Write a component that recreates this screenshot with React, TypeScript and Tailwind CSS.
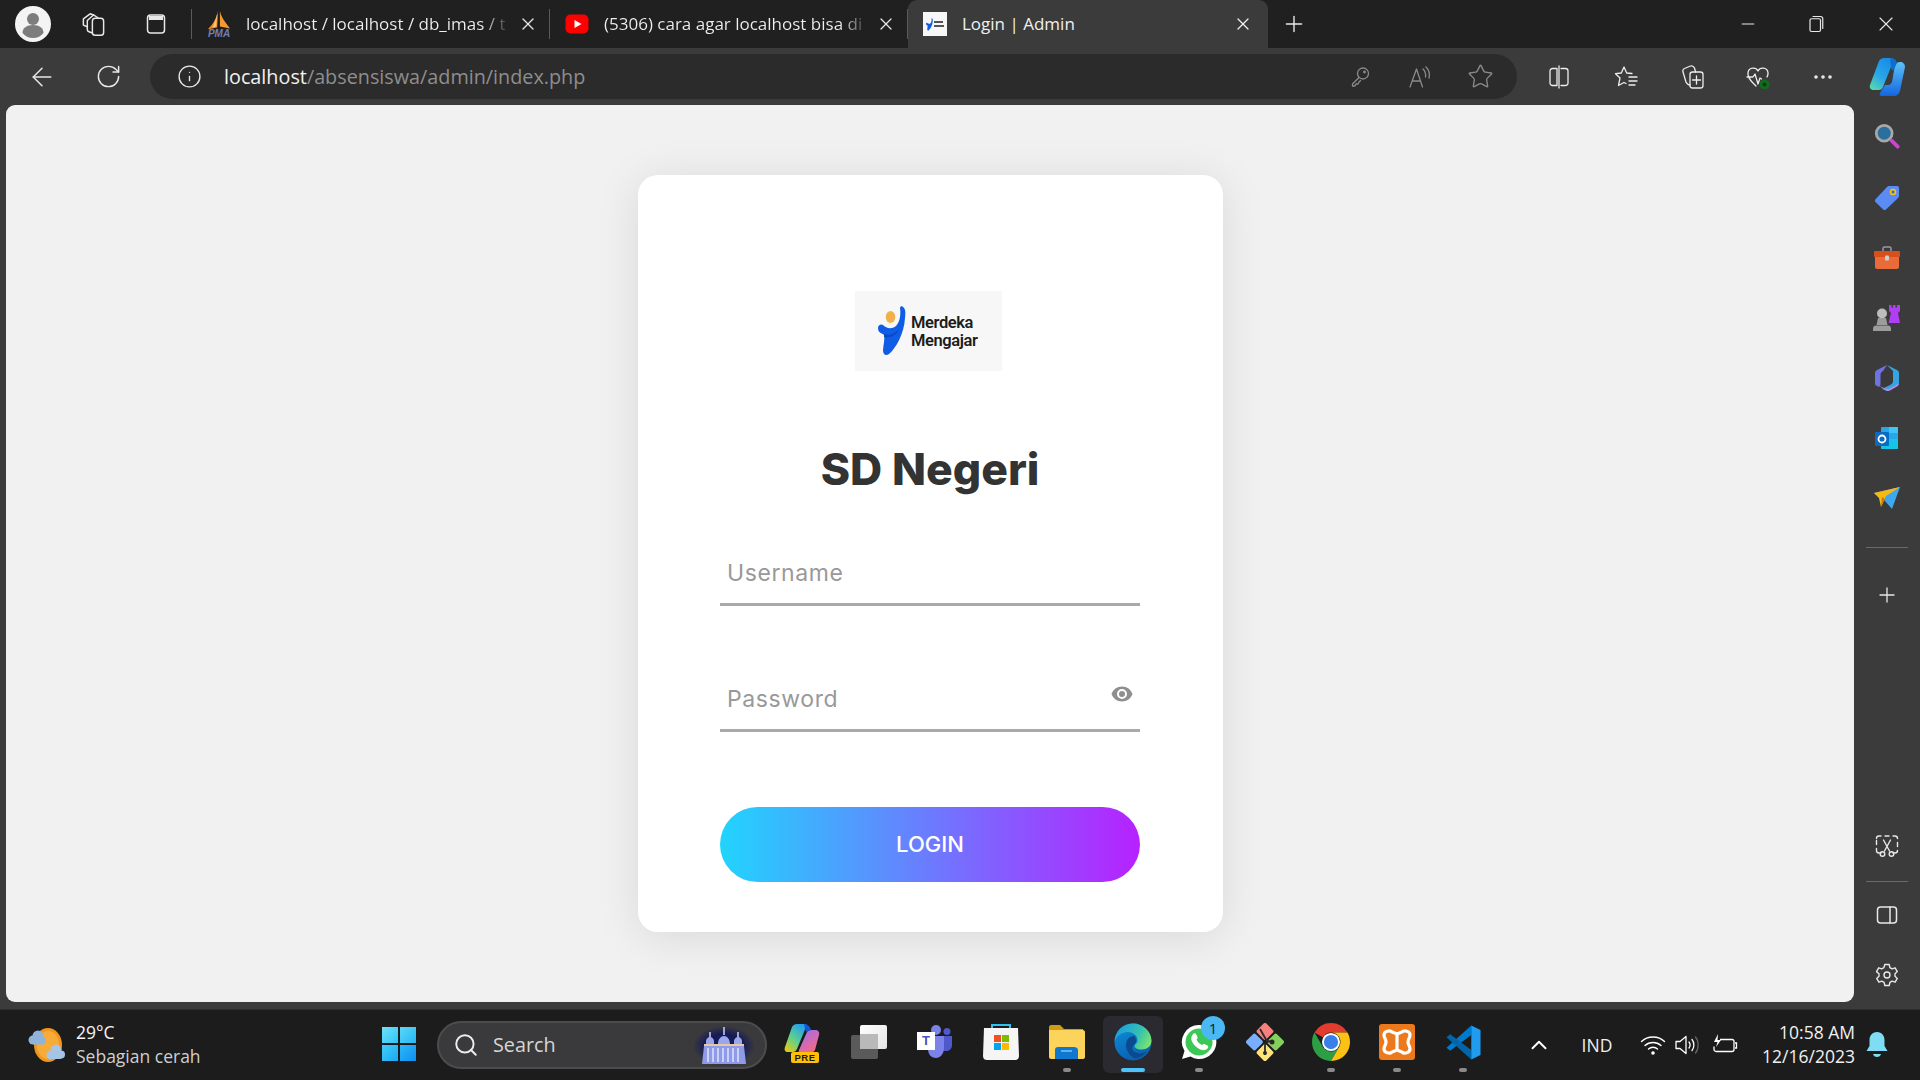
import React from "react";
import { X, Plus, Minus, ArrowLeft, RotateCw, Info, Star, ChevronUp, Search, MoreHorizontal } from "lucide-react";

const S = ({ w = 24, h = 24, vb, children, className = "" }: { w?: number; h?: number; vb?: string; children: React.ReactNode; className?: string }) => (
  <svg width={w} height={h} viewBox={vb ?? `0 0 ${w} ${h}`} fill="none" className={className}>{children}</svg>
);

const stroke = { stroke: "currentColor", strokeWidth: 1.3, strokeLinecap: "round" as const, strokeLinejoin: "round" as const };

const Profile = () => (
  <S w={36} h={36} vb="0 0 36 36">
    <circle cx="18" cy="18" r="18" fill="#f4f4f4" />
    <circle cx="18" cy="13" r="6" fill="#7d7d7d" />
    <path d="M7.5 27c0-5 4-8 10.500-8s10.500 3 10.500 8c-2.500 3-6 5-10.500 5s-8-2-10.500-5z" fill="#7d7d7d" />
  </S>
);
const Workspaces = () => (
  <S w={27} h={27} vb="0 0 24 24"><g {...stroke}><rect x="11" y="6.500" width="10" height="15" rx="2.500" /><path d="M11 19.500l-3-1c-1-.3-1.500-1-1.500-2V8.500L12 3.500l4 2.500" /><path d="M6.500 14L3 12.500V7l6-4.500 3 1" /></g></S>
);
const TabActions = () => (
  <S w={24} h={24}><rect x="3.500" y="3" width="17" height="18" rx="3" {...stroke} strokeWidth={1.5} /><path d="M5 4h14v4H5z" fill="currentColor" /></S>
);
const PmaFav = () => (
  <div className="relative w-[24px] h-[30px]">
    <S w={24} h={24} vb="0 0 26 24">
      <path d="M12 1C11 8 7 15 1 21l10-2z" fill="#f08a1d" />
      <path d="M14 1c1 6 5 12 11 19l-11-2z" fill="#f59a2d" />
      <path d="M6 19c2-5 4-10 5-15l-1 14z" fill="#fbc27c" />
    </S>
    <span className="absolute left-0 bottom-0 w-full text-center text-[10px] leading-[10px] font-bold italic text-[#6f7fb8] font-['Liberation_Sans',sans-serif]">PMA</span>
  </div>
);
const YtFav = () => (
  <S w={24} h={24}><rect x="0.500" y="2.500" width="23" height="19" rx="5" fill="#ff0000" /><path d="M9.500 8l7 4-7 4z" fill="#fff" /></S>
);
const LoginFav = () => (
  <div className="w-6 h-6 bg-[#f7f7f7] flex items-center gap-[1px] pl-[3px]">
    <S w={7} h={15} vb="0 0 28 50"><path d="M24.500.5c2.500 1.500 3.500 4.500 2.500 11.500-1 16-9 30-16 36-3 2-6 1-6-4 .5-6 2-11 1-15-2-2-6-2-6-7 0-3 3-4.500 5-3 3 3 8 5 13 1 4-4 5-12 4-18 0-1.500 1.500-2 2.500-1.500z" fill="#0f5ce6" /></S>
    <div className="flex flex-col gap-[2px]"><div className="w-[9px] h-[2px] bg-[#555]" /><div className="w-[10px] h-[2px] bg-[#555]" /></div>
  </div>
);

const Tab = ({ fav, title }: { fav: React.ReactNode; title: string }) => (
  <div className="w-[358px] h-[30px] flex items-center shrink-0 border-r border-[#5a5a5a]">
    <div className="w-[54px] pl-[15px] flex items-center shrink-0">{fav}</div>
    <div className="w-[268px] whitespace-nowrap text-[17px] bg-clip-text text-transparent bg-[linear-gradient(90deg,#f0f0f0_88%,#20202000_99%)]">{title}</div>
    <X size={20} strokeWidth={1.5} color="#e8e8e8" className="ml-[4px] shrink-0" />
  </div>
);

const Key = () => (<S w={24} h={24}><g {...stroke}><circle cx="15" cy="8.500" r="5.500" /><path d="M11 12.500L4.500 19v2H7l1-2h2l1-2 1.500-1.500" /><circle cx="16.500" cy="7" r=".8" /></g></S>);
const ReadAloud = () => (<S w={26} h={26}><g {...stroke}><path d="M3 23L9.500 5l6 18M5.500 17h8" /><path d="M16 5c2 2 3 5 2.500 8M19 3c3 3 4 7 3 11" /></g></S>);
const Split = () => (<S w={26} h={26}><g {...stroke}><path d="M11 4.500H6.500a2.500 2.500 0 0 0-2.500 2.500v12a2.500 2.500 0 0 0 2.500 2.500H11zM15 4.500h4.500A2.500 2.500 0 0 1 22 7v12a2.500 2.500 0 0 1-2.500 2.500H15M13 2v22" /></g></S>);
const FavList = () => (<S w={26} h={26}><g {...stroke}><path d="M18 9.500L12.700 9 10 3 7.300 9l-5.800.7L6 14l-1.500 7.500 5.500-3 2 1" /><path d="M15 13h8M15 17h8M15 21h6" /></g></S>);
const Coll = () => (<S w={26} h={26}><g {...stroke}><rect x="10" y="8" width="13" height="16" rx="2.500" /><path d="M16.500 12v8M12.500 16h8M10 21c-2 0-3-1-4-3L3 8c-.5-1.500 0-3 1.500-3.500l6-2.500c1.500-.5 3 0 4 2l1 4" /></g></S>);
const Health = () => (
  <S w={28} h={28}><g {...stroke}><path d="M14 8c-2-4-9-4-10 1.500C3.500 13 5 16 9 20l3 3M14 8c2-4 9-4 10 1.500.3 2-.2 3-1 4.500" /><path d="M3 14h6l2-3 3 10 2-6 1.500 1" /></g><circle cx="20.500" cy="21.500" r="5" fill="#126b1e" /><circle cx="20.500" cy="21.500" r="2" fill="#0b3d12" /></S>
);
const CopilotTop = () => (
  <S w={38} h={40} vb="0 0 38 40">
    <defs>
      <linearGradient id="ct1" x1="0" y1="1" x2="0.600" y2="0"><stop offset="0" stopColor="#5fe0a4" /><stop offset="0.500" stopColor="#2aa7e8" /><stop offset="1" stopColor="#1a8fe8" /></linearGradient>
      <linearGradient id="ct2" x1="0.500" y1="0" x2="0.500" y2="1"><stop offset="0" stopColor="#5cc3f7" /><stop offset="1" stopColor="#1565e0" /></linearGradient>
    </defs>
    <path d="M27 8c1-2 3-3 5-3 3 0 5 2 5 5l-5 24c-1 3-3 5-6 5H14c-2 0-3-1-2-3l5-8h3c2 0 3-1 4-3z" fill="url(#ct2)" />
    <path d="M11 4c1-2 3-3 5-3h7c2 0 3 2 2 4L15 30c-1 2-2 3-4 3H6c-3 0-5-2-4-5z" fill="url(#ct1)" />
    <path d="M22 1c3 0 6 1 7 5l-4 8-2-3z" fill="#0e6fc9" />
  </S>
);

const Panel = () => (<S w={24} h={24}><g {...stroke} strokeWidth={1.5}><rect x="2.500" y="4" width="19" height="16" rx="3" /><path d="M15 4v16" /></g></S>);
const Gear = () => (<S w={26} h={26}><g {...stroke} strokeWidth={1.4}><circle cx="13" cy="13" r="3" /><path d="M10.800 2.500h4.400l.7 3.100 2.200 1.200 3-1 2.200 3.800-2.300 2.100v2.600l2.300 2.100-2.200 3.800-3-1-2.200 1.200-.7 3.100h-4.400l-.7-3.100-2.200-1.200-3 1-2.200-3.800 2.300-2.100v-2.600L2.500 9.600l2.200-3.800 3 1 2.200-1.200z" /></g></S>);
const Snip = () => (<S w={26} h={26}><g {...stroke} strokeWidth={1.4}><path d="M7 20H5c-1.500 0-2.500-1-2.500-2.500v-2M2.500 11.500v-4M2.500 5.500C2.500 4 3.500 3 5 3h2M11 3h4M19 3h2c1.500 0 2.500 1 2.500 2.500M23.500 9.500v4M23.500 17.500c0 1.500-1 2.500-2.500 2.500h-2" /><path d="M9.500 7l6 11M16.500 7l-6 11" /><circle cx="8.500" cy="21" r="2.300" /><circle cx="17.500" cy="21" r="2.300" /></g></S>);

const SbSearch = () => (<S w={26} h={26} vb="0 0 28 28"><circle cx="11" cy="11" r="8.500" fill="#2a6f9e" stroke="#a8a8a8" strokeWidth="3" /><path d="M19 19l6.500 6.500" stroke="#d43fd9" strokeWidth="4" strokeLinecap="round" /></S>);
const SbTag = () => (<S w={26} h={26}><path d="M15 1h8c1.200 0 2 .8 2 2v8c0 .8-.3 1.300-1 2L12 24.500c-.8.800-2 .8-2.800 0L1.500 17c-.8-.8-.8-2 0-2.800L13 2c.6-.7 1.200-1 2-1z" fill="#5b8cf5" /><circle cx="19" cy="7" r="2.500" fill="#4a6fd0" stroke="#ffc800" strokeWidth="1.500" /></S>);
const SbTool = () => (<S w={28} h={24} vb="0 0 28 24"><path d="M10 5V2.500C10 1.500 10.500 1 11.500 1h5c1 0 1.500.5 1.500 1.500V5" stroke="#9a9a9a" strokeWidth="1.500" /><rect x="1" y="5" width="26" height="6" rx="1" fill="#d94f1c" /><path d="M2 11h24v10c0 1-1 2-2 2H4c-1 0-2-1-2-2z" fill="#e96b3a" /><rect x="12" y="9.500" width="4" height="5" rx="1" fill="#cfcfcf" /></S>);
const SbChess = () => (<S w={28} h={28}><path d="M16 1h2.500v2.500H20V1h2.500v2.500H24V1h3v6l-2 2 2 10H15.500L18 9l-2-2z" fill="#b13df5" /><circle cx="9" cy="9.500" r="5" fill="#bdbdbd" /><path d="M5 14h8l1.500 7h-11zM0 25c0-2 1-3.500 3-3.500h12c2 0 3 1.500 3 3.500v2H0z" fill="#9c9c9c" /></S>);
const Sb365 = () => (
  <S w={26} h={28} vb="0 0 26 28"><path d="M13 1l10 5c1.500 1 2 2 2 3v10c0 1-.5 2-2 3l-10 5-5-2 8-4c2-1 3-2 3-4V7z" fill="#36a4e0" /><path d="M13 1L3 6C1.500 7 1 8 1 9v10c0 1.500.5 2.500 2 3l1.500.8c1.500 0 2-1 2-3v-9C6.500 9 7.500 8 9 7z" fill="#6f72e0" /><path d="M5 22l8 5c1 0 2 0 3-.5l7-4c1.500-1 2-2 2-3l-9 5c-3 1.500-6-.5-11-2.500z" fill="#b98be8" /><path d="M7 11l6-3.500 6 3v7l-6 3-6-3z" fill="#3a3a3a" /></S>
);
const SbOutlook = () => (<S w={26} h={26}><rect x="7" y="2" width="17" height="22" rx="1" fill="#28a8ea" /><path d="M7 14h17v9a1 1 0 0 1-1 1H8a1 1 0 0 1-1-1z" fill="#14c5e8" /><rect x="15" y="2" width="9" height="6" fill="#50d9ff" opacity=".6" /><rect x="1" y="7" width="14" height="14" rx="1" fill="#0a6bc2" /><circle cx="8" cy="14" r="3.500" stroke="#fff" strokeWidth="1.800" /></S>);
const SbSend = () => (<S w={28} h={24} vb="0 0 28 24"><path d="M1 7l26-6-8 22-7-8z" fill="#3fa7ec" /><path d="M1 7l26-6-14 9-5 11-2-9z" fill="#f5b915" /><path d="M8 21l1-10 3 2z" fill="#c97a0a" /></S>);

const Weather = () => (
  <S w={38} h={36} vb="0 0 38 36">
    <ellipse cx="21" cy="18" rx="14" ry="17" fill="#f0961c" />
    <ellipse cx="21" cy="18" rx="11" ry="14" fill="#f7ac3a" />
    <circle cx="11" cy="9" r="5.500" fill="#8fb4dc" /><circle cx="6" cy="13" r="4.500" fill="#8fb4dc" /><circle cx="15" cy="13.500" r="4" fill="#8fb4dc" /><rect x="5" y="13" width="11" height="4.500" rx="2" fill="#8fb4dc" />
    <circle cx="29" cy="23" r="5.500" fill="#a6c4e3" /><circle cx="24" cy="28" r="4.500" fill="#a6c4e3" /><circle cx="34" cy="27.500" r="4" fill="#a6c4e3" /><rect x="23" y="27.500" width="12" height="4.500" rx="2" fill="#a6c4e3" />
  </S>
);
const WinLogo = () => (
  <div className="grid grid-cols-2 gap-[2px] w-[34px] h-[34px]">
    <div className="bg-[linear-gradient(135deg,#6fe2f8,#2cc4f5)]" />
    <div className="bg-[linear-gradient(135deg,#5cd7f8,#25b7f5)]" />
    <div className="bg-[linear-gradient(135deg,#42cdf8,#1aa6f5)]" />
    <div className="bg-[linear-gradient(135deg,#2cb8f8,#0f8ff0)]" />
  </div>
);
const Palace = () => (
  <S w={62} h={40} vb="0 0 62 40">
    <defs><radialGradient id="pg"><stop offset="0.600" stopColor="#161a55" /><stop offset="1" stopColor="#161a5500" /></radialGradient></defs>
    <ellipse cx="31" cy="21" rx="31" ry="20" fill="url(#pg)" />
    <path d="M31 2v8M17 7v8M45 7v8" stroke="#c7d0ff" strokeWidth="1.500" />
    <path d="M25 19c0-5 3-8 6-8s6 3 6 8zM13 19v-3c0-2 2-4 4-4s4 2 4 4v3zM41 19v-3c0-2 2-4 4-4s4 2 4 4v3z" fill="#9aa6ee" />
    <rect x="11" y="19" width="40" height="2" fill="#e7c9a0" />
    <path d="M11 21h40l2 18H9z" fill="#8f9ae8" />
    <path d="M15 23v14M20 23v14M25 23v14M30 23v14M35 23v14M40 23v14M45 23v14" stroke="#dfe3ff" strokeWidth="1.500" />
  </S>
);
const CopilotPre = () => (
  <div className="relative w-[38px] h-[38px]">
    <S w={36} h={30} vb="0 0 36 30">
      <defs>
        <linearGradient id="cpa" x1="0" y1="1" x2="0.700" y2="0"><stop offset="0" stopColor="#ffc800" /><stop offset="0.500" stopColor="#5fd08c" /><stop offset="1" stopColor="#25a0ee" /></linearGradient>
        <linearGradient id="cpb" x1="0.200" y1="0" x2="0.800" y2="1"><stop offset="0" stopColor="#a26bf0" /><stop offset="1" stopColor="#ff6a78" /></linearGradient>
      </defs>
      <path d="M8 4c1-2 3-3 5-3h8c2 0 2 2 1 3L13 26c-1 2-2 3-4 3H4c-3 0-4-2-3-5z" fill="url(#cpa)" />
      <path d="M23 9c1-1 2-2 4-2h4c3 0 5 2 4 5l-4 15c-1 2-3 3-5 3h-9c-2 0-3-1-2-3z" fill="url(#cpb)" />
      <path d="M20 1c3 0 6 2 7 6l-5 2z" fill="#1557d0" />
    </S>
    <div className="absolute bottom-[-2px] left-[7px] w-[28px] h-[11px] rounded-[2px] bg-[#ffc107] text-[#1c1c1c] text-[9.500px] leading-[11px] font-bold text-center tracking-[.5px] font-['Liberation_Sans',sans-serif]">PRE</div>
  </div>
);
const TaskView = () => (
  <div className="relative w-[36px] h-[34px]">
    <div className="absolute left-0 bottom-0 w-[27px] h-[24px] rounded-[2px] bg-[#5a5a5a]" />
    <div className="absolute right-0 top-0 w-[27px] h-[24px] rounded-[2px] bg-[linear-gradient(135deg,#ffffff,#e5e5e5)]" />
    <div className="absolute left-[9px] top-[9px] w-[18px] h-[15px] bg-[#b9b9b9]" />
  </div>
);
const Teams = () => (
  <div className="relative w-[36px] h-[34px]">
    <S w={36} h={34} vb="0 0 36 34"><circle cx="19" cy="5" r="5" fill="#7b83eb" /><circle cx="30" cy="6.500" r="3.500" fill="#5059c9" /><path d="M26 11h9v9c0 4-3 6-6 6-1 0-2 0-3-.5z" fill="#5059c9" /><path d="M11 11h16v12c0 6-4 10-8 10-5 0-8-4-8-9z" fill="#7b83eb" /></S>
    <div className="absolute left-0 top-[7px] w-[18px] h-[18px] bg-white text-[#4b53bc] text-[13px] leading-[18px] font-bold text-center font-['Liberation_Sans',sans-serif]">T</div>
  </div>
);
const Store = () => (
  <S w={36} h={38} vb="0 0 36 38"><path d="M9 6V2h18v4" stroke="#2fc0ec" strokeWidth="2" /><path d="M1 5h34l1 28c0 3-2 4-4 4H4c-2 0-4-1-4-4z" fill="#f5f5f5" /><rect x="11" y="12" width="7" height="7" fill="#f25022" /><rect x="19" y="12" width="7" height="7" fill="#7fba00" /><rect x="11" y="20" width="7" height="7" fill="#00a4ef" /><rect x="19" y="20" width="7" height="7" fill="#ffb900" /></S>
);
const Folder = () => (
  <S w={36} h={34} vb="0 0 36 34"><path d="M0 2c0-1 1-2 2-2h9l4 4h19v10H0z" fill="#d19d10" /><path d="M0 5h34c1 0 2 1 2 2v25c0 1-1 2-2 2H2c-1 0-2-1-2-2z" fill="#fcd45c" /><path d="M6 34V25c0-2 1-3 3-3h16c2 0 4 1 4 3v9z" fill="#0f77cf" /><path d="M12 26h11" stroke="#7fc2f0" strokeWidth="1.500" /></S>
);
const Edge = () => (
  <S w={38} h={38} vb="0 0 38 38">
    <defs>
      <linearGradient id="eg1" x1="0" y1="0.300" x2="1" y2="0.700"><stop offset="0" stopColor="#1a9de0" /><stop offset="0.600" stopColor="#35c1b0" /><stop offset="1" stopColor="#7de56a" /></linearGradient>
      <linearGradient id="eg2" x1="0.200" y1="0" x2="0.600" y2="1"><stop offset="0" stopColor="#0c8ed9" /><stop offset="1" stopColor="#0a5fae" /></linearGradient>
    </defs>
    <circle cx="19" cy="19" r="18.500" fill="url(#eg2)" />
    <path d="M19 .5c10 0 18.500 8 18.500 17 0 6-5 9-10 9-4 0-7-1.500-7-3.500 0-1.500 3-2.500 3-6 0-5-5-8-10-8S2 13 .5 19C.5 9 8 .5 19 .5z" fill="url(#eg1)" />
    <path d="M20 13c-5 0-8 4-8 9s3 10 8 13c2 1 9-1 13-7-3 2-7 3-10 2-4-1-5-3-4.500-6 .5-2 3-3 3.500-5 .3-2-.5-6-2-6z" fill="#0b4a8f" />
  </S>
);
const WhatsApp = () => (
  <S w={38} h={38} vb="0 0 38 38"><path d="M19 2a17 17 0 0 0-14.500 26L2 36l8.500-2.500A17 17 0 1 0 19 2z" fill="#fff" /><circle cx="19" cy="19" r="13.500" fill="#3cc856" /><path d="M13 11c1-1 2.500-1 3 0l1.500 3c.3 1 0 1.500-1 2.500 1 2.500 3 4.500 5.500 5.500 1-1 1.500-1.300 2.500-1l3 1.500c1 .5 1 2 0 3-2 2-5 2.500-9 0-3.500-2-6-5.500-7-8-.5-2.500 0-4.500 1.500-6.500z" fill="#fff" /></S>
);
const GitApp = () => (
  <S w={38} h={38} vb="0 0 38 38">
    <g transform="rotate(45 19 19)"><rect x="5" y="5" width="13" height="13" rx="2" fill="#f58080" /><rect x="20" y="5" width="13" height="13" rx="2" fill="#84d05a" /><rect x="20" y="20" width="13" height="13" rx="2" fill="#ffe27a" /><rect x="5" y="20" width="13" height="13" rx="2" fill="#7aaeff" /></g>
    <path d="M14 6l8 14M19 20v12M22 18l5 1" stroke="#2a2a2a" strokeWidth="1.800" /><circle cx="26" cy="19" r="2.500" fill="#2a2a2a" /><circle cx="19" cy="30" r="2" fill="#2a2a2a" />
  </S>
);
const Chrome = () => (
  <S w={38} h={38} vb="4 4 40 40">
    <path d="M24 4a20 20 0 0 1 17.320 10H24a10 10 0 0 0-8.660 5L6.680 14A20 20 0 0 1 24 4z" fill="#e33b2e" />
    <path d="M6.680 14l8.660 15a10 10 0 0 0 17.320 0L24 44A20 20 0 0 1 6.680 14z" fill="#2c9f45" />
    <path d="M41.320 14H24a10 10 0 0 1 8.660 15L24 44a20 20 0 0 0 17.320-30z" fill="#fbc115" />
    <circle cx="24" cy="24" r="9.500" fill="#fff" /><circle cx="24" cy="24" r="7.500" fill="#3a7ee8" />
  </S>
);
const Xampp = () => (
  <S w={36} h={36} vb="6 6 36 36"><rect x="6" y="6" width="36" height="36" rx="3" fill="#ec7a1d" /><path d="M11 17c0-4 6-5 8-3l5 2 5-2c2-2 8-1 8 3 0 3-2 4-2 7s2 4 2 7c0 4-6 5-8 3l-5-2-5 2c-2 2-8 1-8-3 0-3 2-4 2-7s-2-4-2-7z" stroke="#fff" strokeWidth="3.200" /><path d="M24 16v16" stroke="#fff" strokeWidth="3.200" /></S>
);
const VSCode = () => (
  <S w={37} h={37} vb="0 0 100 100"><path d="M71 30L14 72 4 64 71 4z" fill="#007acc" /><path d="M71 70L14 28 4 36l67 60z" fill="#0065a9" /><path d="M71 4l25 12v68L71 96z" fill="#1f9cf0" /></S>
);
const Wifi = () => (<S w={26} h={22} vb="0 0 26 22"><g stroke="#fff" strokeWidth="1.400" strokeLinecap="round"><path d="M1.500 7.500c6-6 17-6 23 0M5 11.500c4.500-4 11.500-4 16 0M8.500 15c2.500-2.300 6.500-2.300 9 0" /></g><circle cx="13" cy="19" r="1.800" fill="#fff" /></S>);
const Speaker = () => (<S w={26} h={24} vb="0 0 26 24"><path d="M2 8.500h4l6-5v17l-6-5H2z" stroke="#fff" strokeWidth="1.300" strokeLinejoin="round" /><path d="M15 9c1.500 2 1.500 4 0 6M18 6.500c2.500 3 2.500 8 0 11" stroke="#fff" strokeWidth="1.300" strokeLinecap="round" /><path d="M21.500 4c3.500 4 3.500 12 0 16" stroke="#666" strokeWidth="1.300" strokeLinecap="round" /></S>);
const Battery = () => (<S w={26} h={24} vb="0 0 26 24"><path d="M8 6.500h12c1 0 2 1 2 2v8c0 1-1 2-2 2H4c-1 0-2-1-2-2v-3" stroke="#fff" strokeWidth="1.300" /><path d="M23 10h1.500v5H23" stroke="#fff" strokeWidth="1.300" /><path d="M6 1L2 9h3.500L4 14l5-7H5.500z" fill="#fff" /></S>);
const Bell = () => (<S w={24} h={30} vb="0 0 24 30"><path d="M12 2c5 0 7.500 4 7.500 8v6l3 5H1.500l3-5v-6c0-4 2.500-8 7.500-8z" fill="#7fdcf5" /><path d="M8 24h8c-.5 2-2 3-4 3s-3.500-1-4-3z" fill="#7fdcf5" /></S>);
const Eye = () => (<S w={22} h={16} vb="0 0 22 16"><path fillRule="evenodd" d="M11 0.500C6 .5 2 3.500 0.500 8 2 12.500 6 15.500 11 15.500S20 12.500 21.500 8C20 3.500 16 .5 11 .5zm0 12.500a5 5 0 1 1 0-10 5 5 0 0 1 0 10zm0-8a3 3 0 1 0 0 6 3 3 0 0 0 0-6z" fill="#8f8f8f" /></S>);

const LogoMark = () => (
  <S w={28} h={50} vb="0 0 28 50">
    <path d="M24.500.5c2.500 1.500 3.500 4.500 2.500 11.500-1 16-9 30-16 36-3 2-6 1-6-4 .5-6 2-11 1-15-2-2-6-2-6-7 0-3 3-4.500 5-3 3 3 8 5 13 1 4-4 5-12 4-18 0-1.500 1.500-2 2.500-1.500z" fill="#0f5ce6" />
    <path d="M6 28c5 2 11 0 15-5-2 6-8 9-15 8z" fill="#0b49bd" />
    <ellipse cx="12.500" cy="11" rx="4.800" ry="6" fill="#f2b04a" />
  </S>
);

const sidebarTop = [<SbTag key="t" />, <SbTool key="b" />, <SbChess key="c" />, <Sb365 key="m" />, <SbOutlook key="o" />, <SbSend key="s" />];

const Dot = ({ active = false }: { active?: boolean }) => (
  <div className={active ? "absolute bottom-[8px] w-[24px] h-[4px] rounded-full bg-[#4fc3f7]" : "absolute bottom-[8px] w-[8px] h-[4px] rounded-full bg-[#8a8a8a]"} />
);
const Slot = ({ children, dot, active }: { children: React.ReactNode; dot?: boolean; active?: boolean }) => (
  <div className="relative w-[66px] h-full flex items-center justify-center shrink-0">
    {active && <div className="absolute left-[3px] right-[3px] top-[6px] bottom-[7px] rounded-[6px] bg-[#2a2a30]" />}
    <div className="relative -mt-[6px] flex items-center justify-center">{children}</div>
    {dot && <Dot active={active} />}
  </div>
);

export default function App() {
  return (
    <div className="w-[1920px] h-[1080px] overflow-hidden flex flex-col bg-[#3b3b3b] text-white font-['Open_Sans','Noto_Sans',sans-serif]">
      {/* tab strip */}
      <div className="h-[48px] bg-[#202020] flex items-center shrink-0">
        <div className="w-[66px] flex justify-center"><Profile /></div>
        <div className="w-[54px] flex justify-center text-[#e8e8e8]"><Workspaces /></div>
        <div className="w-[71px] flex justify-center text-[#e8e8e8]"><TabActions /></div>
        <div className="w-px h-[30px] bg-[#5a5a5a]" />
        <Tab fav={<PmaFav />} title="localhost / localhost / db_imas / t" />
        <Tab fav={<YtFav />} title="(5306) cara agar localhost bisa di" />
        <div className="w-[360px] h-full bg-[#3b3b3b] rounded-t-[9px] flex items-center shrink-0">
          <div className="w-[54px] pl-[15px] shrink-0"><LoginFav /></div>
          <div className="w-[271px] text-[17px] text-[#f0f0f0] whitespace-nowrap">Login | Admin</div>
          <X size={20} strokeWidth={1.5} color="#f0f0f0" className="shrink-0" />
        </div>
        <div className="w-[52px] flex justify-center text-[#e8e8e8]"><Plus size={26} strokeWidth={1.3} /></div>
        <div className="flex-1" />
        <div className="w-[68px] flex justify-center text-[#e8e8e8]"><Minus size={20} strokeWidth={1.2} /></div>
        <div className="w-[68px] mr-[2px] flex justify-center text-[#e8e8e8]">
          <S w={18} h={18} vb="0 0 24 24"><g {...stroke} strokeWidth={1.6}><rect x="4" y="5" width="14" height="17" rx="2" /><path d="M8 2h10c2 0 3 1 3 3v13" /></g></S>
        </div>
        <div className="w-[68px] flex justify-center text-[#e8e8e8]"><X size={24} strokeWidth={1.1} /></div>
      </div>
      {/* toolbar */}
      <div className="h-[57px] flex items-start shrink-0">
        <div className="w-[75px] pl-[9px] h-[57px] flex items-center justify-center text-[#e8e8e8] shrink-0"><ArrowLeft size={30} strokeWidth={1.2} /></div>
        <div className="w-[66px] h-[57px] flex items-center justify-center text-[#e8e8e8] shrink-0"><RotateCw size={27} strokeWidth={1.3} /></div>
        <div className="w-[1367px] h-[45px] mt-[6px] ml-[9px] rounded-[23px] bg-[#2b2b2b] flex items-center shrink-0">
          <div className="w-[34px] ml-[22px] flex justify-center text-[#e8e8e8]"><Info size={25} strokeWidth={1.3} /></div>
          <div className="ml-[18px] text-[19.800px] whitespace-nowrap text-[#f2f2f2]">localhost<span className="text-[#8e8e8e]">/absensiswa/admin/index.php</span></div>
          <div className="flex-1" />
          <div className="w-[60px] flex justify-center text-[#8a8a8a]"><Key /></div>
          <div className="w-[60px] flex justify-center text-[#8a8a8a]"><ReadAloud /></div>
          <div className="w-[60px] mr-[7px] flex justify-center text-[#8a8a8a]"><Star size={27} strokeWidth={1.2} /></div>
        </div>
        <div className="h-[57px] ml-[9px] flex items-center text-[#ededed]">
          <div className="w-[66px] flex justify-center"><Split /></div>
          <div className="w-[70px] flex justify-center"><FavList /></div>
          <div className="w-[62px] flex justify-center"><Coll /></div>
          <div className="w-[68px] flex justify-center"><Health /></div>
          <div className="w-[62px] flex justify-center"><MoreHorizontal size={24} strokeWidth={1.6} /></div>
          <div className="w-[66px] flex justify-center"><CopilotTop /></div>
        </div>
      </div>
      {/* middle */}
      <div className="h-[897px] flex shrink-0">
        <div className="w-[1848px] ml-[6px] bg-[#f1f1f1] rounded-[9px] flex items-center justify-center shrink-0">
          <div className="w-[585px] h-[757px] bg-white rounded-[20px] shadow-[0_5px_45px_rgba(0,0,0,0.1)] flex flex-col items-center pt-[116px] font-['Inter',sans-serif]">
            <div className="w-[147px] h-[80px] mr-[3px] bg-[#f7f7f7] flex items-center pl-[23px] shrink-0">
              <LogoMark />
              <div className="ml-[5px] font-['Roboto',sans-serif] font-semibold text-[#1c1c1c] text-[16.500px] leading-[18px] tracking-[-.4px] mt-[1px]">Merdeka<br />Mengajar</div>
            </div>
            <h1 className="mt-[64px] text-[44.500px] leading-[68px] font-extrabold text-[#333333]">SD Negeri</h1>
            <div className="mt-[40px] w-[420px] relative">
              <input readOnly placeholder="Username" className="w-full h-[63px] border-b-[3px] border-[#a9a9a9] pl-[7px] text-[23px] outline-none placeholder:text-[#999999] tracking-[.6px]" />
            </div>
            <div className="mt-[63px] w-[420px] relative">
              <input readOnly placeholder="Password" className="w-full h-[63px] border-b-[3px] border-[#a9a9a9] pl-[7px] text-[23px] outline-none placeholder:text-[#999999] tracking-[.6px]" />
              <div className="absolute right-[7px] top-[17px]"><Eye /></div>
            </div>
            <button className="mt-[75px] w-[420px] h-[75px] rounded-full bg-[linear-gradient(90deg,#21d4fd,#b721ff)] text-white text-[22px] font-medium">LOGIN</button>
          </div>
        </div>
        <div className="w-[66px] flex flex-col items-center pt-[3px] text-[#e8e8e8] shrink-0">
          <div className="h-[60px] -mt-[2px] mb-[2px] flex items-center justify-center"><SbSearch /></div>
          {sidebarTop.map((ic, i) => (<div key={i} className="h-[60px] flex items-center justify-center">{ic}</div>))}
          <div className="mt-[19px] w-[42px] h-px bg-[#6a6a6a] shrink-0" />
          <div className="h-[60px] w-full mt-[17px] flex items-center justify-center"><Plus size={24} strokeWidth={1.3} /></div>
          <div className="flex-1" />
          <div className="h-[60px] mb-[5px] flex items-center justify-center"><Snip /></div>
          <div className="w-[42px] h-px bg-[#6a6a6a] mb-[3px] shrink-0" />
          <div className="h-[60px] flex items-center justify-center"><Panel /></div>
          <div className="h-[60px] -mb-[3px] flex items-center justify-center"><Gear /></div>
        </div>
      </div>
      <div className="h-[7px] shrink-0" />
      {/* taskbar */}
      <div className="h-[71px] bg-[#1c1c1c] border-t border-[#2e2e2e] flex items-center shrink-0">
        <div className="w-[370px] flex items-center pl-[27px] shrink-0">
          <Weather />
          <div className="ml-[11px] text-[17.500px] leading-[24px] -mt-[2px]">
            <div className="text-[#f4f4f4]">29°C</div>
            <div className="text-[#cfcfcf]">Sebagian cerah</div>
          </div>
        </div>
        <div className="w-[67px] pl-[12px] -mt-[2px] shrink-0"><WinLogo /></div>
        <div className="w-[330px] h-[48px] rounded-full bg-[#3a3a3c] border-2 border-[#4c4c4e] flex items-center pl-[14px] pr-[10px] -mt-[1px] shrink-0">
          <Search size={26} strokeWidth={1.8} color="#ededed" />
          <span className="ml-[14px] text-[19.800px] text-[#d6d6d6]">Search</span>
          <div className="flex-1" />
          <Palace />
        </div>
        <div className="w-[3px] shrink-0" />
        <div className="flex h-full items-stretch">
          <Slot><CopilotPre /></Slot>
          <Slot><TaskView /></Slot>
          <Slot><Teams /></Slot>
          <Slot><Store /></Slot>
          <Slot dot><Folder /></Slot>
          <Slot dot active><Edge /></Slot>
          <Slot dot>
            <div className="relative"><WhatsApp />
              <div className="absolute -top-[7px] right-[-7px] w-[24px] h-[24px] rounded-full bg-[#4ab8f5] text-[#10202c] text-[15px] leading-[24px] text-center">1</div>
            </div>
          </Slot>
          <Slot><GitApp /></Slot>
          <Slot dot><Chrome /></Slot>
          <Slot dot><Xampp /></Slot>
          <Slot dot><VSCode /></Slot>
        </div>
        <div className="w-[20px] shrink-0" />
        <div className="w-[46px] flex justify-center text-white shrink-0"><ChevronUp size={26} strokeWidth={1.8} /></div>
        <div className="w-[70px] text-center text-[17.500px] text-[#f0f0f0] shrink-0">IND</div>
        <div className="w-[4px] shrink-0" />
        <div className="w-[34px] flex justify-center shrink-0"><Wifi /></div>
        <div className="w-[34px] flex justify-center shrink-0"><Speaker /></div>
        <div className="w-[42px] flex justify-center shrink-0"><Battery /></div>
        <div className="w-[109px] text-right text-[17.500px] leading-[24px] -mt-[2px] text-[#f0f0f0] shrink-0">
          <div>10:58 AM</div>
          <div>12/16/2023</div>
        </div>
        <div className="w-[44px] flex justify-center shrink-0"><Bell /></div>
      </div>
    </div>
  );
}
